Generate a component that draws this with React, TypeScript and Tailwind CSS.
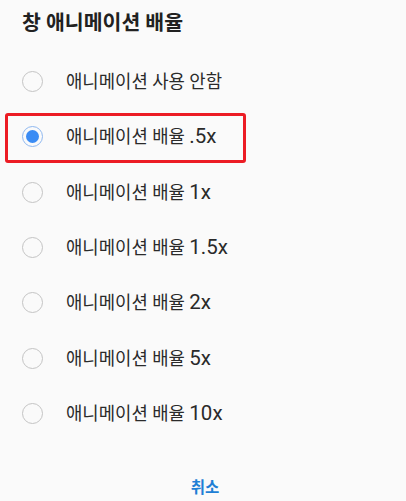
import React from "react";

const items: [string, string][] = [
  ["애니메이션 사용 안함", ""],
  ["애니메이션 배율 ", ".5x"],
  ["애니메이션 배율 ", "1x"],
  ["애니메이션 배율 ", "1.5x"],
  ["애니메이션 배율 ", "2x"],
  ["애니메이션 배율 ", "5x"],
  ["애니메이션 배율 ", "10x"],
];

export default function App() {
  return (
    <div
      className="w-[406px] h-[501px] bg-[#fafafa] overflow-hidden flex flex-col"
      style={{ fontFamily: "Roboto, 'Noto Sans CJK KR', sans-serif" }}
    >
      <div className="pl-[22px] pt-[10px] text-[20.5px] leading-[26px] font-bold text-[#212121]">
        창 애니메이션 배율
      </div>
      <div className="mt-[18px] flex flex-col">
        {items.map(([k, l], i) => (
          <div key={k + l} className="relative h-[55.3px] flex items-center">
            <div className="w-[62px] flex justify-center pl-[2px]">
              {i === 1 ? (
                <div className="w-[21px] h-[21px] rounded-full border-[1.5px] border-[#8fb8f0] flex items-center justify-center">
                  <div className="w-[13px] h-[13px] rounded-full bg-[#3b8cf4]" />
                </div>
              ) : (
                <div className="w-[21px] h-[21px] rounded-full border-[1.5px] border-[#c4c4c4]" />
              )}
            </div>
            <div className="pl-[4px] text-[17.8px] text-[#2a2a2a] leading-[24px] whitespace-pre">
              {k}
              {l && <span className="text-[20.5px]">{l}</span>}
            </div>
            {i === 1 && (
              <div className="absolute left-[5px] top-[4px] w-[241px] h-[50px] border-[3.5px] border-[#ec1c24] rounded-[3px]" />
            )}
          </div>
        ))}
      </div>
      <div className="flex-1 flex items-end justify-center pb-[3px]">
        <span className="text-[15.5px] font-bold text-[#1f7fd5] leading-[20px] pl-[4px]">취소</span>
      </div>
    </div>
  );
}
